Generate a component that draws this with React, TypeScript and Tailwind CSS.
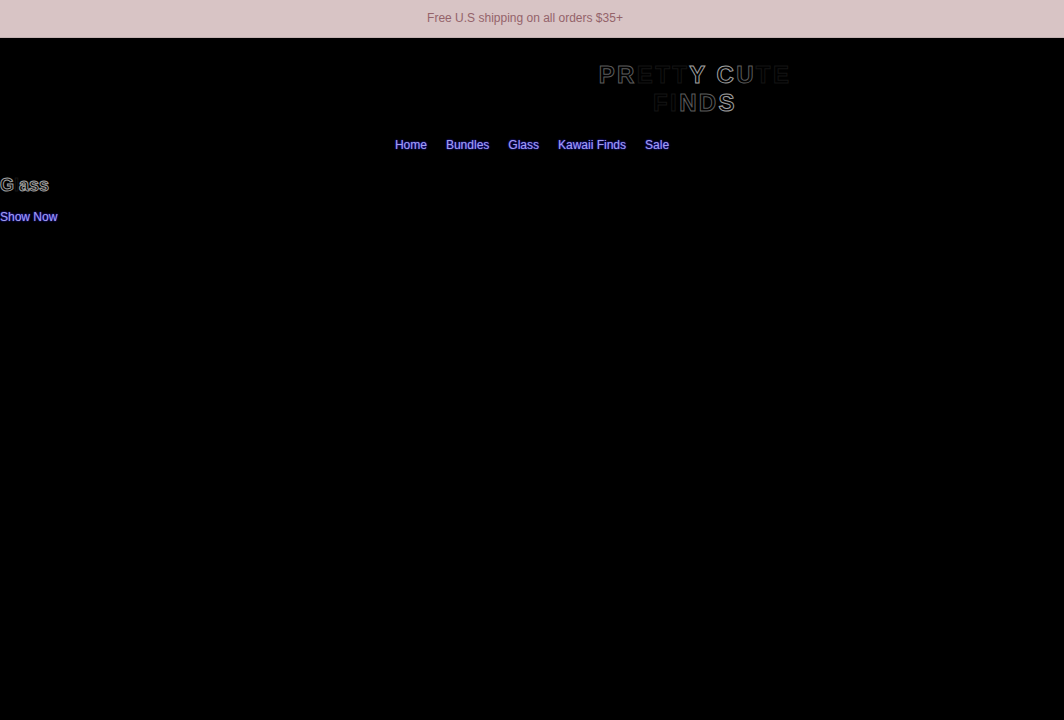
import { clsx } from 'clsx'

interface NavLink {
  label: string
  href: string
}

type Tone = 'bright' | 'soft' | 'faint'

interface TextPart {
  text: string
  tone: Tone
}

const navLinks: NavLink[] = [
  { label: 'Home', href: '#home' },
  { label: 'Bundles', href: '#bundles' },
  { label: 'Glass', href: '#glass' },
  { label: 'Kawaii Finds', href: '#kawaii-finds' },
  { label: 'Sale', href: '#sale' }
]

const titleParts: TextPart[] = [
  { text: 'P', tone: 'soft' },
  { text: 'R', tone: 'soft' },
  { text: 'ETT', tone: 'faint' },
  { text: 'Y ', tone: 'bright' },
  { text: 'C', tone: 'bright' },
  { text: 'U', tone: 'soft' },
  { text: 'TE ', tone: 'faint' },
  { text: 'FI', tone: 'faint' },
  { text: 'N', tone: 'soft' },
  { text: 'D', tone: 'soft' },
  { text: 'S', tone: 'bright' }
]

const headingParts: TextPart[] = [
  { text: 'G', tone: 'bright' },
  { text: 'l', tone: 'faint' },
  { text: 'ass', tone: 'bright' }
]

const linkClass = 'text-[#a3a0e6] [text-shadow:0_0_2px_#2a20e0,0_0_1px_#2a20e0] hover:text-white'

// Black letters, drawn by their outline only
function OutlinedText({ parts }: { parts: TextPart[] }) {
  return (
    <>
      {parts.map((part, index) => (
        <span
          key={index}
          className={clsx(
            part.tone === 'bright' && '[-webkit-text-stroke:1px_#a0a0a0]',
            part.tone === 'soft' && '[-webkit-text-stroke:1px_#5c5c5c]',
            part.tone === 'faint' && '[-webkit-text-stroke:1px_#141414]'
          )}
        >
          {part.text}
        </span>
      ))}
    </>
  )
}

export default function App() {
  return (
    <div className="min-h-screen bg-black font-['Liberation_Sans',Arial,sans-serif] text-xs">
      <div className="border-b border-[#c4b2b3] bg-[#d8c4c5] pt-2.5 pb-[11px] pr-3.5 text-center text-[#94636a]">
        <p>Free U.S shipping on all orders $35+</p>
      </div>

      <header className="pt-[23px]">
        <div className="pl-[326px]">
          <h1 className="mx-auto max-w-[212px] text-center text-2xl/7 font-bold tracking-widest text-black">
            <OutlinedText parts={titleParts} />
          </h1>
        </div>
        <nav className="mt-5 flex justify-center gap-[19px]">
          {navLinks.map((link) => (
            <a key={link.href} href={link.href} className={linkClass}>
              {link.label}
            </a>
          ))}
        </nav>
      </header>

      <main className="mt-5">
        <h2 className="text-lg/6 font-bold text-black">
          <OutlinedText parts={headingParts} />
        </h2>
        <a href="#glass" className={clsx('mt-3 inline-block', linkClass)}>
          Show Now
        </a>
      </main>
    </div>
  )
}
